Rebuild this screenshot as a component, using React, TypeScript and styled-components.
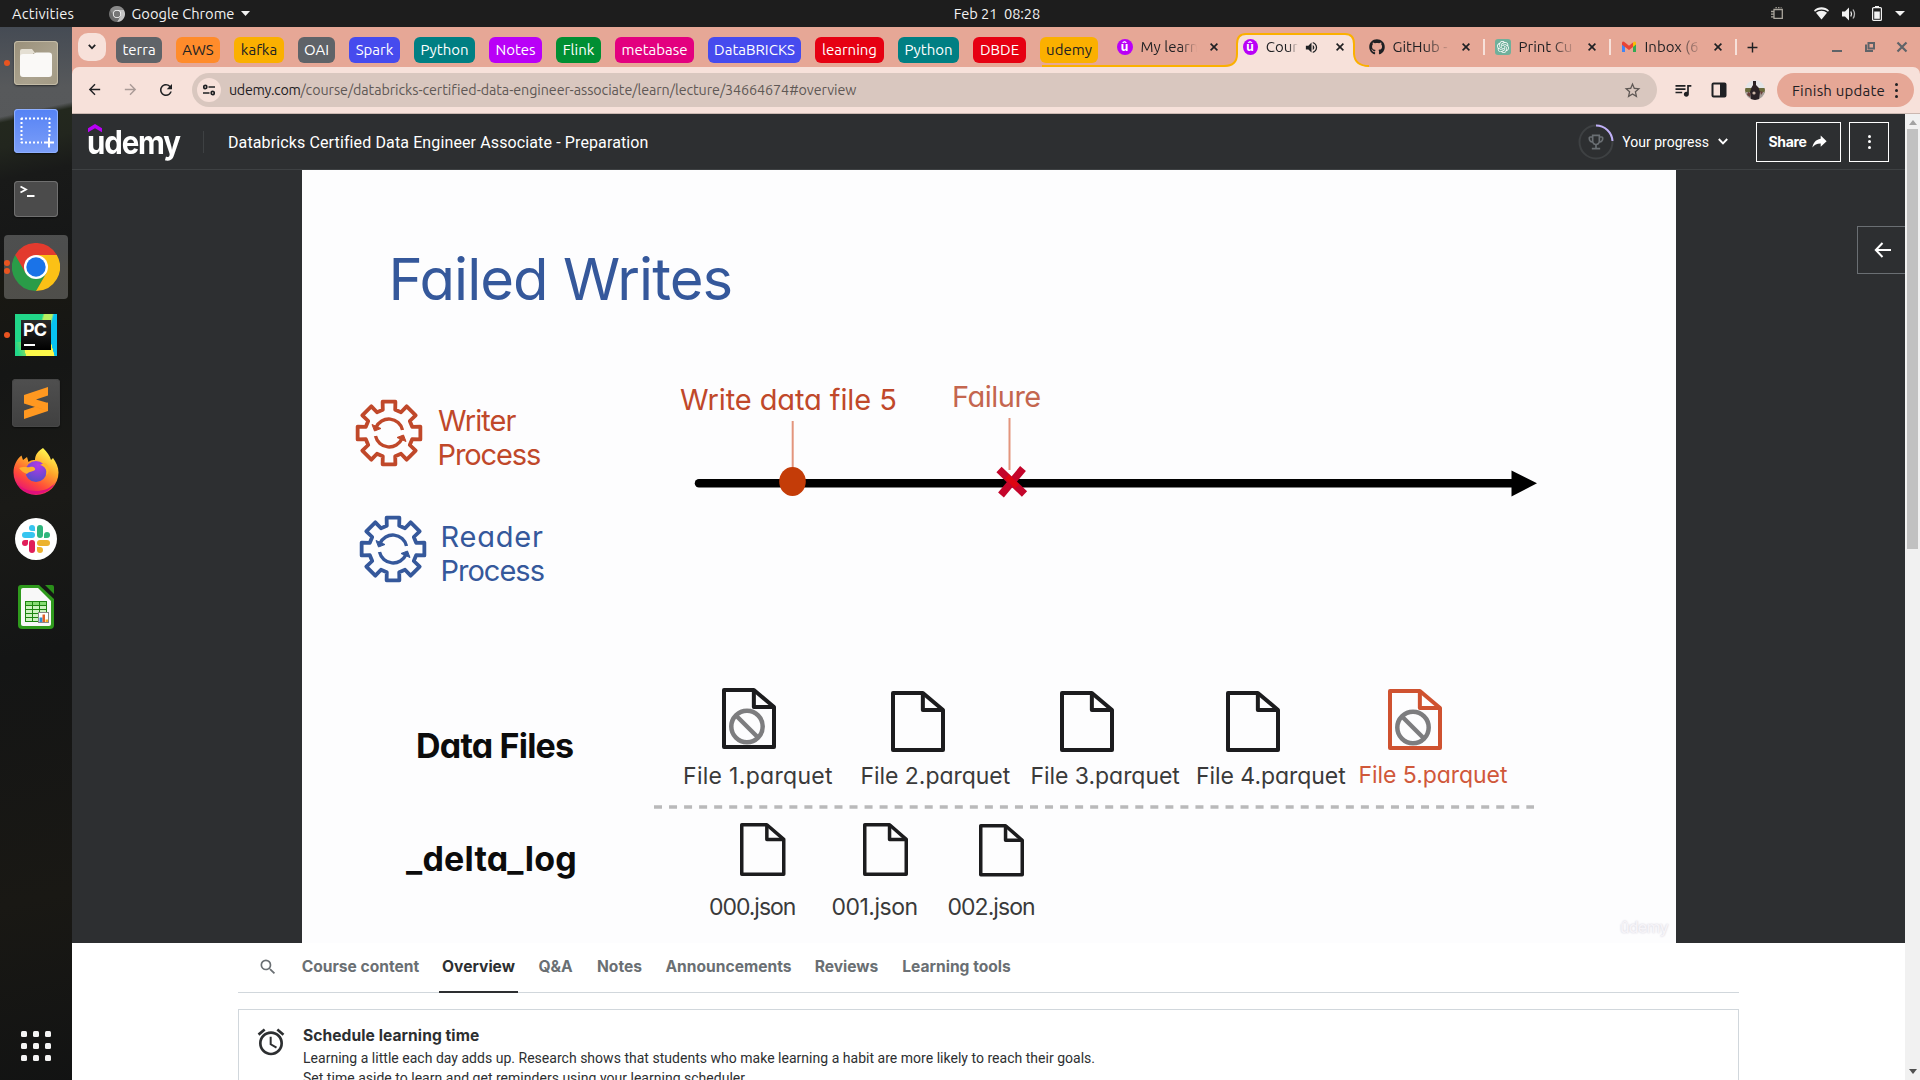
import React from "react";
import styled, { createGlobalStyle, css } from "styled-components";
import {
  MdAdd,
  MdAlarm,
  MdArrowBack,
  MdArrowForward,
  MdOutlineEmojiEvents,
  MdQueueMusic,
  MdRefresh,
  MdSearch,
  MdStarBorder,
  MdVolumeUp,
} from "react-icons/md";
import { FaGithub } from "react-icons/fa";
import { IoMdShareAlt } from "react-icons/io";
import { SiOpenai } from "react-icons/si";

const uiFont = `Ubuntu, "Noto Sans", sans-serif`;
const bodyFont = `Roboto, "Liberation Sans", sans-serif`;
const headFont = `Inter, "Liberation Sans", sans-serif`;

const c = {
  strip: "#e6a796",
  toolbar: "#f7e1da",
  omnibox: "#d9c7bf",
  dark: "#2d2f31",
  line: "#d1d7dc",
  ink: "#1f2023",
  rust: "#c0482a",
  blue: "#35589b",
};

const GlobalStyle = createGlobalStyle`
  *, *::before, *::after { box-sizing: border-box; }
  body { margin: 0; overflow: hidden; background: #fff; }
  svg { display: block; flex: none; }
`;

const Desktop = styled.div`
  width: 1920px;
  height: 1080px;
  overflow: hidden;
  display: grid;
  grid-template: 27px 1053px / 72px 1848px;
  font-family: ${uiFont};
`;

/* ---------- system bar ---------- */

const SystemBar = styled.header`
  grid-column: 1 / 3;
  display: grid;
  grid-template-columns: 1fr auto 1fr;
  align-items: center;
  background: #1d1d1d;
  color: #f2f2f2;
  font-size: 14.67px;
  line-height: 27px;
`;
const SystemLeft = styled.div`
  min-width: 0;
  display: flex;
  align-items: center;
  padding-left: 12px;
`;
const Activities = styled.span`
  letter-spacing: 0.2px;
`;
const AppMenu = styled.div`
  display: flex;
  align-items: center;
  gap: 6.5px;
  margin-left: 35px;
`;
const Clock = styled.div`
  white-space: pre;
  letter-spacing: -0.09px;
`;
const SystemRight = styled.div`
  min-width: 0;
  display: flex;
  justify-content: flex-end;
  align-items: center;
  padding-right: 15px;
`;
const Tray = styled.span<{ $gap: number }>`
  margin-left: ${(p) => p.$gap}px;
`;

/* ---------- dock ---------- */

const Dock = styled.nav`
  display: flex;
  flex-direction: column;
  gap: 4px;
  padding: 4px 4px 2px;
  background:
    linear-gradient(168deg, transparent 0 88px, #23281e 94px, #22261e 118px, #191a19 150px, #161717 230px, #191812 250px, #151615 340px, #1a1a17 470px, #141515 620px, #191814 860px, #121313 1053px),
    linear-gradient(#454b54, #57595b 60px, #4a4b4c);
`;
const DockItem = styled.div<{ $active?: boolean; $last?: boolean }>`
  position: relative;
  width: 64px;
  height: 64px;
  display: flex;
  align-items: center;
  justify-content: center;
  border-radius: 4px;
  background: ${(p) => (p.$active ? "rgba(255,255,255,.24)" : "transparent")};
  margin-top: ${(p) => (p.$last ? "auto" : 0)};
`;
const RunningDots = styled.span`
  position: absolute;
  left: 0;
  top: 0;
  bottom: 0;
  display: flex;
  flex-direction: column;
  justify-content: center;
  gap: 2.5px;
`;
const RunningDot = styled.i`
  width: 6px;
  height: 6px;
  border-radius: 50%;
  background: #e95420;
`;
const Tile = styled.div<{ $w: number; $h: number; $bg: string; $edge: string }>`
  width: ${(p) => p.$w}px;
  height: ${(p) => p.$h}px;
  border-radius: 4px;
  background: ${(p) => p.$bg};
  box-shadow: inset 0 0 0 1px ${(p) => p.$edge}, 0 1px 2px rgba(0, 0, 0, 0.5);
  display: flex;
  align-items: center;
  justify-content: center;
`;
const PyCharmTile = styled.div`
  width: 42px;
  height: 42px;
  padding: 6px;
  background:
    linear-gradient(75deg, #21d789 8%, #6fdc6a 24%, transparent 25%) 0 100% / 100% 34% no-repeat,
    linear-gradient(75deg, #fcf84a 86%, #07c3f2 87%) 0 100% / 100% 34% no-repeat,
    linear-gradient(105deg, #21d789 52%, #b8f060 56%, #b8f060 70%, #07c3f2 74%);
`;
const PyCharmInner = styled.div`
  width: 30px;
  height: 30px;
  padding: 2px;
  background: linear-gradient(#2b2b2b, #000);
  color: #fff;
  font: 700 18px/16px ${headFont};
  letter-spacing: -1px;
`;
const PyCharmBar = styled.div`
  width: 11px;
  height: 2px;
  margin: 6px 0 0 1px;
  background: #fff;
`;
const AppsGrid = styled.div`
  display: grid;
  grid-template-columns: repeat(3, 6px);
  gap: 6px;
`;
const AppsDot = styled.i`
  height: 6px;
  border-radius: 1.5px;
  background: #f4f4f4;
`;

/* ---------- browser chrome ---------- */

const Browser = styled.div`
  display: flex;
  flex-direction: column;
  min-width: 0;
`;
const TabStrip = styled.div`
  height: 40px;
  display: flex;
  align-items: flex-start;
  background: ${c.strip};
  padding-left: 6px;
  color: ${c.ink};
`;
const TabSearch = styled.div`
  width: 28px;
  height: 28px;
  margin: 6px 10px 0 0;
  border-radius: 10px;
  background: ${c.toolbar};
  display: flex;
  align-items: center;
  justify-content: center;
`;
const Chips = styled.div`
  display: flex;
  gap: 14px;
  margin-top: 10px;
`;
const Chip = styled.div<{ $w: number; $bg: string; $dark?: boolean }>`
  width: ${(p) => p.$w}px;
  height: 26px;
  border-radius: 6px;
  background: ${(p) => p.$bg};
  color: ${(p) => (p.$dark ? "#202124" : "#fff")};
  font-size: 15px;
  line-height: 25px;
  text-align: center;
  white-space: nowrap;
`;
const Tabs = styled.div`
  position: relative;
  display: flex;
  margin-left: 9px;
`;
const GroupOutline = styled.svg`
  position: absolute;
  left: -67px;
  top: 0;
`;
const TabBox = styled.div<{ $rule?: boolean }>`
  position: relative;
  width: 126px;
  height: 40px;
  padding: 0 15px 0 9.5px;
  display: flex;
  align-items: center;
  &::after {
    content: "";
    position: absolute;
    right: 0;
    top: 12px;
    width: 2px;
    height: 16px;
    background: ${(p) => (p.$rule ? c.toolbar : "transparent")};
  }
`;
const TabLabel = styled.div<{ $w: number; $solid?: boolean }>`
  width: ${(p) => p.$w}px;
  margin: 0 auto 0 8px;
  overflow: hidden;
  white-space: nowrap;
  font-size: 15px;
  line-height: 38px;
  mask-image: linear-gradient(to right, #000 ${(p) => (p.$solid ? 70 : 55)}%, transparent);
`;
const Speaker = styled.div`
  margin: 0 17px 0 6px;
`;
const UdemyBadge = styled.div`
  width: 16px;
  height: 16px;
  border-radius: 50%;
  background: #b900f7;
  color: #fff;
  font: 700 12px/15px ${headFont};
  text-align: center;
`;
const GptBadge = styled.div`
  width: 16px;
  height: 16px;
  border-radius: 3px;
  background: #6fb09b;
  color: #fff;
  display: flex;
  align-items: center;
  justify-content: center;
`;
const NewTab = styled.div`
  width: 30px;
  height: 40px;
  display: flex;
  align-items: center;
  justify-content: center;
`;
const WindowControls = styled.div`
  margin-left: auto;
  height: 40px;
  display: flex;
  align-items: center;
  gap: 20.5px;
  padding-right: 12px;
`;
const ToolbarBack = styled.div`
  background: ${c.strip};
`;
const Toolbar = styled.div`
  height: 47px;
  border-bottom: 1px solid #cbb8b1;
  border-radius: 7px 7px 0 0;
  background: ${c.toolbar};
  display: flex;
  align-items: center;
  padding: 0 6px 0 14px;
  color: ${c.ink};
`;
const NavButtons = styled.div`
  display: flex;
  gap: 18.5px;
  width: 106px;
`;
const Omnibox = styled.div`
  width: 1465px;
  height: 34px;
  border-radius: 17px;
  background: ${c.omnibox};
  display: flex;
  align-items: center;
  padding: 0 15px 0 5px;
  color: #5f5855;
`;
const SiteInfo = styled.div`
  width: 24px;
  height: 24px;
  border-radius: 50%;
  background: ${c.toolbar};
  display: flex;
  align-items: center;
  justify-content: center;
  margin-right: 8px;
`;
const Url = styled.div`
  font-size: 14.3px;
  line-height: 34px;
  letter-spacing: -0.06px;
  margin-right: auto;
  white-space: nowrap;
`;
const Host = styled.span`
  color: ${c.ink};
  letter-spacing: -0.3px;
`;
const ToolbarIcon = styled.div<{ $gap: number }>`
  margin-left: ${(p) => p.$gap}px;
`;
const Avatar = styled.svg`
  margin-left: 18px;
  border-radius: 50%;
`;
const UpdateButton = styled.div`
  width: 137px;
  height: 34px;
  margin-left: 12px;
  border-radius: 17px;
  background: ${c.strip};
  display: flex;
  align-items: center;
  padding-left: 15px;
  font-size: 15px;
  letter-spacing: 0.22px;
  white-space: nowrap;
`;
const DotColumn = styled.div<{ $ml?: number; $size: number; $gap: number; $color: string }>`
  display: grid;
  gap: ${(p) => p.$gap}px;
  margin-left: ${(p) => p.$ml ?? 0}px;
  i {
    width: ${(p) => p.$size}px;
    height: ${(p) => p.$size}px;
    border-radius: 50%;
    background: ${(p) => p.$color};
  }
`;

/* ---------- page ---------- */

const Viewport = styled.div`
  flex: 1;
  min-height: 0;
  display: grid;
  grid-template-columns: 1833px 15px;
`;
const Page = styled.main`
  overflow: hidden;
  background: #fff;
  color: ${c.dark};
  font-family: ${bodyFont};
`;
const Scrollbar = styled.div`
  background: #f1f1f1;
  display: flex;
  flex-direction: column;
  align-items: center;
  padding: 6px 0;
`;
const Thumb = styled.div`
  width: 11px;
  height: 420px;
  margin: 4px 0 auto;
  background: #c1c1c1;
`;
const CourseHeader = styled.header`
  height: 56px;
  display: flex;
  align-items: center;
  background: ${c.dark};
  border-bottom: 1px solid #3e4143;
  color: #fff;
  padding: 0 16px;
`;
const Logo = styled.div`
  position: relative;
  width: 115px;
  height: 56px;
`;
const LogoHat = styled.svg`
  position: absolute;
  left: 0;
  top: 10px;
`;
const LogoText = styled.div`
  font: 650 32px/56px ${headFont};
  letter-spacing: -1.2px;
  transform: scaleX(0.92);
  transform-origin: left;
  margin-left: -1.5px;
  padding-top: 1px;
`;
const HeaderRule = styled.div`
  width: 1px;
  height: 22px;
  background: #3e4143;
  margin-right: 24px;
`;
const CourseTitle = styled.h1`
  margin: 0 auto 0 0;
  font-size: 16px;
  font-weight: 400;
  letter-spacing: 0.12px;
  padding-top: 1px;
`;
const Progress = styled.div`
  display: flex;
  align-items: center;
  font-size: 14px;
`;
const Ring = styled.div`
  position: relative;
  width: 36px;
  height: 36px;
  margin-right: 8px;
  color: #6a6f73;
`;
const RingIcon = styled.div`
  position: absolute;
  left: 8px;
  top: 8px;
`;
const ProgressText = styled.span`
  margin-right: 9px;
`;
const OutlineButton = styled.div<{ $w: number; $ml: number }>`
  width: ${(p) => p.$w}px;
  height: 40px;
  margin-left: ${(p) => p.$ml}px;
  border: 1px solid #fff;
  display: flex;
  align-items: center;
  justify-content: center;
  gap: 3px;
  font: 700 14px ${headFont};
  letter-spacing: -0.3px;
`;
const Stage = styled.section`
  height: 773px;
  display: grid;
  grid-template-columns: 230px 1374px 229px;
  background: ${c.dark};
`;
const Gutter = styled.div`
  display: flex;
  justify-content: flex-end;
  align-items: flex-start;
  padding-top: 56px;
`;
const ExpandButton = styled.div`
  width: 48px;
  height: 48px;
  border: 1px solid #6a6f73;
  border-right: 0;
  color: #fff;
  display: flex;
  align-items: center;
  padding-left: 16px;
`;

/* ---------- slide ---------- */

const Slide = styled.div`
  position: relative;
  background: #fdfdfe;
  overflow: hidden;
`;
const Label = styled.div<{ $x: number; $base: number; $size: number; $ls: number; $color: string; $bold?: boolean }>`
  position: absolute;
  left: ${(p) => p.$x - 302}px;
  top: ${(p) => p.$base - 170 - p.$size * 0.864}px;
  font: ${(p) => (p.$bold ? 750 : 430)} ${(p) => p.$size}px/1 ${headFont};
  font-feature-settings: "cv11";
  letter-spacing: ${(p) => p.$ls}px;
  color: ${(p) => p.$color};
  white-space: nowrap;
`;
const Node = styled.svg<{ $x: number; $y: number }>`
  position: absolute;
  left: ${(p) => p.$x - 302}px;
  top: ${(p) => p.$y - 170}px;
  overflow: visible;
`;
const Watermark = styled.div`
  position: absolute;
  right: 8px;
  bottom: 8px;
  font: 500 16px/1 ${headFont};
  letter-spacing: -0.8px;
  color: #f6f4f8;
  text-shadow: 0 0 2px #cfccd8;
`;

/* ---------- course tabs ---------- */

const Content = styled.section`
  width: 1501px;
  margin-left: 166px;
`;
const CourseTabs = styled.div`
  height: 50px;
  display: flex;
  gap: 16px;
  padding-left: 20px;
  border-bottom: 1px solid ${c.line};
`;
const SearchTab = styled.div`
  width: 24px;
  display: flex;
  align-items: center;
  color: #6a6f73;
  padding-bottom: 1px;
`;
const CourseTab = styled.div<{ $active?: boolean; $w: number }>`
  width: ${(p) => p.$w}px;
  height: 50px;
  font: 700 15.6px/48px ${headFont};
  text-align: center;
  white-space: nowrap;
  color: ${(p) => (p.$active ? c.dark : "#6a6f73")};
  ${(p) => p.$active && css`box-shadow: inset 0 -2px 0 ${c.dark};`}
`;
const ReminderCard = styled.div`
  display: flex;
  margin-top: 16px;
  height: 120px;
  border: 1px solid ${c.line};
  padding: 16px 16px 0;
  color: ${c.dark};
`;
const CardBody = styled.div`
  margin-left: 16px;
`;
const CardTitle = styled.h2`
  margin: 0;
  font: 700 15.6px/20px ${headFont};
  letter-spacing: 0.06px;
`;
const CardText = styled.p`
  margin: 2px 0 0;
  font-size: 14px;
  line-height: 20px;
  letter-spacing: 0.02px;
`;

/* ---------- data ---------- */

const chips: [string, number, string, boolean?][] = [
  ["terra", 46, "#5f6368"],
  ["AWS", 44, "#ff8c2b", true],
  ["kafka", 50, "#fbb000", true],
  ["OAI", 37, "#5f6368"],
  ["Spark", 51, "#464bee"],
  ["Python", 61, "#007f83"],
  ["Notes", 53, "#b900f7"],
  ["Flink", 45, "#008f33"],
  ["metabase", 79, "#e3007f"],
  ["DataBRICKS", 93, "#464bee"],
  ["learning", 69, "#e60012"],
  ["Python", 61, "#007f83"],
  ["DBDE", 53, "#e60012"],
  ["udemy", 58, "#fbb000", true],
];

const labels: { t: string; x: number; base: number; size: number; ls: number; color: string; bold?: boolean }[] = [
  { t: "Failed Writes", x: 388.5, base: 300.5, size: 58, ls: -0.95, color: c.blue },
  { t: "Writer", x: 438, base: 431, size: 29, ls: -0.9, color: c.rust },
  { t: "Process", x: 437.5, base: 465.5, size: 29, ls: -1.1, color: c.rust },
  { t: "Reader", x: 440.5, base: 547, size: 29, ls: 0.8, color: c.blue },
  { t: "Process", x: 440.5, base: 581.5, size: 29, ls: -1.0, color: c.blue },
  { t: "Write data file 5", x: 680, base: 410, size: 29, ls: -0.1, color: c.rust },
  { t: "Failure", x: 952, base: 407.5, size: 29, ls: -0.5, color: "#c4664f" },
  { t: "Data Files", x: 416, base: 758.5, size: 34, ls: -0.8, color: "#0c0c0c", bold: true },
  { t: "_delta_log", x: 406, base: 871.5, size: 34, ls: 0.2, color: "#0c0c0c", bold: true },
  { t: "File 1.parquet", x: 683, base: 785, size: 23, ls: 0.3, color: "#3a3a3a" },
  { t: "File 2.parquet", x: 860.5, base: 785, size: 23, ls: -0.05, color: "#3a3a3a" },
  { t: "File 3.parquet", x: 1030.5, base: 785, size: 23, ls: -0.05, color: "#3a3a3a" },
  { t: "File 4.parquet", x: 1196, base: 785, size: 23, ls: -0.05, color: "#3a3a3a" },
  { t: "File 5.parquet", x: 1358.5, base: 783.5, size: 23, ls: -0.05, color: "#d0583a" },
  { t: "000.json", x: 709, base: 915.5, size: 23, ls: -1.05, color: "#3a3a3a" },
  { t: "001.json", x: 831.5, base: 915.5, size: 23, ls: -0.5, color: "#3a3a3a" },
  { t: "002.json", x: 947.5, base: 916, size: 23, ls: -0.95, color: "#3a3a3a" },
];

const files = [
  { x: 721.5, y: 688, w: 54, h: 61, color: "#1c1c1e", blocked: true },
  { x: 890.5, y: 691, w: 54, h: 61, color: "#1c1c1e" },
  { x: 1059.5, y: 691, w: 54, h: 61, color: "#1c1c1e" },
  { x: 1225.5, y: 691, w: 54, h: 61, color: "#1c1c1e" },
  { x: 1388, y: 689, w: 54, h: 61, color: "#cf5230", blocked: true },
  { x: 740, y: 822.5, w: 45.5, h: 53, color: "#1c1c1e" },
  { x: 862.5, y: 822.5, w: 45, h: 53, color: "#1c1c1e" },
  { x: 979, y: 824, w: 45, h: 52.5, color: "#1c1c1e" },
];

const courseTabs: [string, number][] = [
  ["Course content", 125],
  ["Overview", 79],
  ["Q&A", 43],
  ["Notes", 53],
  ["Announcements", 133],
  ["Reviews", 71],
  ["Learning tools", 117],
];

/* ---------- slide drawings ---------- */

function FileIcon({ x, y, w, h, color, blocked }: (typeof files)[number]) {
  const s = w > 50 ? 4 : 3.5;
  const k = s / 2;
  const fx = w * 0.59;
  const fy = h * 0.31;
  return (
    <Node $x={x} $y={y} width={w} height={h} fill="none" stroke={color} strokeWidth={s} strokeLinejoin="round">
      <path d={`M${k} ${k}H${fx}L${w - k} ${fy}V${h - k}H${k}Z`} />
      <path d={`M${fx} ${k}V${fy}H${w - k}`} />
      {blocked && (
        <g stroke="#7d7d7f" strokeWidth="4.5">
          <circle cx="25" cy="38.5" r="15.7" />
          <path d="M14 27.5L36 49.5" />
        </g>
      )}
    </Node>
  );
}

function gearPath() {
  const pts: string[] = [];
  for (let i = 0; i < 8; i++) {
    for (const [r, d] of [
      [24, -15],
      [32, -11.5],
      [32, 11.5],
      [24, 15],
    ]) {
      const a = ((i * 45 + d - 90) * Math.PI) / 180;
      pts.push(`${(r * Math.cos(a)).toFixed(2)} ${(r * Math.sin(a)).toFixed(2)}`);
    }
  }
  return `M${pts.join("L")}Z`;
}

function Gear({ x, y, color }: { x: number; y: number; color: string }) {
  return (
    <Node $x={x - 34} $y={y - 34} width="68" height="68" viewBox="-34 -34 68 68" fill="none" stroke={color}>
      <path d={gearPath()} strokeWidth="3.8" strokeLinejoin="round" />
      <path d="M-13 -5.5A14 14 0 0 1 13.5 -3M13 5.5A14 14 0 0 1 -13.5 3" strokeWidth="3.4" />
      <path d="M-17 -8.5L-14.5 -2L-8 -4.5ZM17 8.5L14.5 2L8 4.5Z" fill={color} strokeWidth="1" />
    </Node>
  );
}

function SlideCanvas() {
  return (
    <Slide>
      <Gear x={389} y={433} color={c.rust} />
      <Gear x={392.5} y={549} color={c.blue} />
      <Node $x={690} $y={415} width="850" height="90">
        <path d="M102.7 6V60" stroke="#e3957d" strokeWidth="2" />
        <path d="M319.5 3V55" stroke="#e3957d" strokeWidth="2" />
        <path d="M9 68.3H825" stroke="#000" strokeWidth="8.5" strokeLinecap="round" />
        <path d="M821.5 55.5L847 68.3L821.5 81.5Z" fill="#000" />
        <ellipse cx="102.5" cy="66.5" rx="13.3" ry="14.5" fill="#c43c08" />
        <path d="M309 54.500L334.500 79M333 53.500L311 80" stroke="#c4052b" strokeWidth="7.500" />
        <path d="M317 61.500L327 71.500" stroke="#de0512" strokeWidth="6" />
      </Node>
      {files.map((f) => (
        <FileIcon key={f.x} {...f} />
      ))}
      <Node $x={654} $y={805} width="880" height="4">
        <path d="M0 2H880" stroke="#b9b9ba" strokeWidth="3.5" strokeDasharray="8 7.040" />
      </Node>
      {labels.map((l) => (
        <Label key={l.x + l.t} $x={l.x} $base={l.base} $size={l.size} $ls={l.ls} $color={l.color} $bold={l.bold}>
          {l.t}
        </Label>
      ))}
      <Watermark>ûdemy</Watermark>
    </Slide>
  );
}

/* ---------- dock icons ---------- */

const FilesIcon = () => (
  <Tile $w={44} $h={44} $bg="linear-gradient(135deg,#9a907a,#aaa28e 60%,#a39a84)" $edge="#c3bba6">
    <svg width="34" height="30" viewBox="0 0 34 30">
      <path d="M1 3a2 2 0 0 1 2-2h10l3 4h-2v8H1z" fill="#e4dfd3" />
      <path d="M1 9a3 3 0 0 1 3-3h10l3-1.500H30a3 3 0 0 1 3 3V26a3 3 0 0 1-3 3H4a3 3 0 0 1-3-3z" fill="#faf9f7" />
    </svg>
  </Tile>
);
const ScreenshotIcon = () => (
  <Tile $w={44} $h={44} $bg="linear-gradient(#5582f5,#7c9ff8)" $edge="#8fb0ff">
    <svg width="36" height="34" viewBox="0 0 36 34" fill="none" stroke="#fff">
      <path d="M3 4.500H32M3 28.500H24" strokeWidth="2" strokeDasharray="2 2" />
      <path d="M3.500 4V29M31.500 4V22" strokeWidth="2" strokeDasharray="2 2" />
      <path d="M26 28.500H36M31 23.500V33.500" strokeWidth="2" />
    </svg>
  </Tile>
);
const TerminalIcon = () => (
  <Tile $w={44} $h={36} $bg="#4b4b4b" $edge="#707070">
    <svg width="44" height="36" viewBox="0 0 44 36" fill="none" stroke="#fff" strokeWidth="1.8">
      <path d="M6.500 5.500L12 8.500L6.500 11.500M13 15H20.500" />
    </svg>
  </Tile>
);
const ChromeIcon = ({ size = 48, mono = false }: { size?: number; mono?: boolean }) => (
  <svg width={size} height={size} viewBox="-24 -24 48 48">
    <path d="M0 0L-20.800 -12A24 24 0 0 1 20.800 -12Z" fill={mono ? "#8a8a8a" : "#e33b2e"} />
    <path d="M-20.800 -12A24 24 0 0 0 0 24L10.400 6L0 0Z" fill={mono ? "#6d6d6d" : "#2a9c48"} />
    <path d="M20.800 -12A24 24 0 0 1 0 24L10.400 6L0 -12Z" fill={mono ? "#c4c4c4" : "#fbc116"} />
    <path d="M-20.800 -12L-10.400 6L0 -12H20.800L0 -18Z" fill={mono ? "#8a8a8a" : "#e33b2e"} />
    <circle r="12" fill="#fff" />
    <circle r="9.700" fill={mono ? "#777" : "#1a73e8"} />
  </svg>
);
const SublimeIcon = () => (
  <Tile $w={48} $h={48} $bg="linear-gradient(#4f4f4f,#404040)" $edge="#474747">
    <svg width="24" height="32" viewBox="0 0 24 32">
      <path d="M0 23.500L24 15.500V24L0 32Z" fill="#ff9820" />
      <path d="M0 8L24 0V8.500L12 12.500L24 16V24L0 16.500Z" fill="#ff9820" />
      <path d="M10 19.500L24 24L15 21Z" fill="#d87808" />
    </svg>
  </Tile>
);
const FirefoxIcon = () => (
  <svg width="46" height="47" viewBox="0 0 46 47">
    <defs>
      <linearGradient id="fxBody" x1="0.8" y1="0.1" x2="0.3" y2="1">
        <stop offset="0" stopColor="#fff44f" />
        <stop offset="0.35" stopColor="#ffa52a" />
        <stop offset="0.7" stopColor="#ff4a3a" />
        <stop offset="1" stopColor="#e5107a" />
      </linearGradient>
      <radialGradient id="fxGlobe" cx="0.6" cy="0.2" r="0.9">
        <stop offset="0" stopColor="#b03ae8" />
        <stop offset="1" stopColor="#4b4fc4" />
      </radialGradient>
    </defs>
    <path
      d="M30 0C34 4 37 8 38 12L40 10C43 14 45.500 19 45.500 24.500A22.500 22.500 0 0 1 .5 24.500C.5 18 3.500 11 8.500 7.500L10 12L14 9L15.500 14C18 12 20 12 22 12C22 7 25 3 30 0Z"
      fill="url(#fxBody)"
    />
    <path d="M3 34A22.500 22.500 0 0 0 43 34C37 41 30 43 23 43C14 43 7 40 3 34Z" fill="#e0107c" />
    <circle cx="23" cy="23.500" r="10.500" fill="url(#fxGlobe)" />
    <path d="M6 20C10 18 14 20 17 19C20 18 23 20 22 22C20 24 16 23 14 26C11 25 8 23 6 20Z" fill="#ffb02e" />
    <path d="M27 17C32 18 35 23 33 28C38 22 36 16 31 15Z" fill="#ffb52b" />
  </svg>
);
const SlackIcon = () => (
  <svg width="42" height="42" viewBox="0 0 42 42">
    <circle cx="21" cy="21" r="21" fill="#fff" />
    <g fill="#36c5f0">
      <rect x="7" y="14" width="13" height="6" rx="3" />
      <path d="M20 13H17a3 3 0 1 1 3-3Z" />
    </g>
    <g fill="#2eb67d">
      <rect x="22" y="7" width="6" height="13" rx="3" />
      <path d="M29 20V17a3 3 0 1 1 3 3Z" />
    </g>
    <g fill="#ecb22e">
      <rect x="22" y="22" width="13" height="6" rx="3" />
      <path d="M22 29H25a3 3 0 1 1-3 3Z" />
    </g>
    <g fill="#e01e5a">
      <rect x="14" y="22" width="6" height="13" rx="3" />
      <path d="M13 22V25a3 3 0 1 1-3-3Z" />
    </g>
  </svg>
);
const CalcIcon = () => (
  <svg width="38" height="46" viewBox="0 0 38 46">
    <path d="M4 1H22L37 15V41a4 4 0 0 1-4 4H5a4 4 0 0 1-4-4V4a3 3 0 0 1 3-3Z" fill="#2f9a1d" />
    <path d="M28 1H35a2 2 0 0 1 2 2V10Z" fill="#2a8f1a" />
    <path d="M6 4H21L34 17V40a2 2 0 0 1-2 2H6a2 2 0 0 1-2-2V6a2 2 0 0 1 2-2Z" fill="#f8f8f8" />
    <rect x="8" y="17" width="22" height="21" fill="#1d8410" />
    {[0, 1, 2, 3, 4].map((r) =>
      [0, 1, 2].map((k) => (
        <rect key={`${r}${k}`} x={9 + k * 7} y={18 + r * 4} width="6" height="3" fill={r ? "#cdf2c0" : "#86dc72"} />
      )),
    )}
    <rect x="21.500" y="28.500" width="10" height="10" fill="#fff" stroke="#888" />
    <path d="M22.500 33.500h3V38h-3z" fill="#2b8fd8" />
    <path d="M25.500 30.500h2.500V38h-2.500z" fill="#e0602a" />
    <path d="M28.500 35.500h2.500V38h-2.500z" fill="#f0b020" />
  </svg>
);

function LauncherDock() {
  return (
    <Dock>
      <DockItem>
        <RunningDots>
          <RunningDot />
        </RunningDots>
        <FilesIcon />
      </DockItem>
      <DockItem>
        <ScreenshotIcon />
      </DockItem>
      <DockItem>
        <TerminalIcon />
      </DockItem>
      <DockItem $active>
        <RunningDots>
          <RunningDot />
          <RunningDot />
        </RunningDots>
        <ChromeIcon />
      </DockItem>
      <DockItem>
        <RunningDots>
          <RunningDot />
        </RunningDots>
        <PyCharmTile>
          <PyCharmInner>
            PC
            <PyCharmBar />
          </PyCharmInner>
        </PyCharmTile>
      </DockItem>
      <DockItem>
        <SublimeIcon />
      </DockItem>
      <DockItem>
        <FirefoxIcon />
      </DockItem>
      <DockItem>
        <SlackIcon />
      </DockItem>
      <DockItem>
        <CalcIcon />
      </DockItem>
      <DockItem $last>
        <AppsGrid>
          {Array.from({ length: 9 }, (_, i) => (
            <AppsDot key={i} />
          ))}
        </AppsGrid>
      </DockItem>
    </Dock>
  );
}

/* ---------- composition ---------- */

const ClockSlot = styled.div`
  padding-left: 74px;
`;

function TopBar() {
  return (
    <SystemBar>
      <SystemLeft>
        <Activities>Activities</Activities>
        <AppMenu>
          <ChromeIcon size={16} mono />
          Google Chrome
          <svg width="9" height="5" viewBox="0 0 9 5">
            <path d="M0 0H9L4.500 5Z" fill="#f2f2f2" />
          </svg>
        </AppMenu>
      </SystemLeft>
      <ClockSlot>
        <Clock>Feb 21  08:28</Clock>
      </ClockSlot>
      <SystemRight>
        <Tray $gap={0}>
          <svg width="12" height="13" viewBox="0 0 12 13" fill="none" stroke="#a9a59c" strokeWidth="1.300">
            <path d="M3 2.500H11.300V11.300H3Z" />
            <path d="M0 4.500H3M0 7.200H3M0 9.900H3" />
            <path d="M4.500 .6H10.500" strokeDasharray="1.300 1.300" />
          </svg>
        </Tray>
        <Tray $gap={31}>
          <svg width="15" height="13" viewBox="0 0 15 13" fill="#f2f2f2">
            <path d="M0 3.500C4 -.8 11 -.8 15 3.500L14 4.800C10.500 1.600 4.500 1.600 1 4.800Z" />
            <path d="M2 5.700C5 3 10 3 13 5.700L7.500 12.500Z" />
          </svg>
        </Tray>
        <Tray $gap={13}>
          <svg width="15" height="14" viewBox="0 0 15 14" fill="none" stroke="#f2f2f2" strokeWidth="1.300">
            <path d="M0 4.500H3L7 .5V13.500L3 9.500H0Z" fill="#f2f2f2" stroke="none" />
            <path d="M8.800 4.500Q10.300 7 8.800 9.500" />
            <path d="M11 2.500Q14 7 11 11.500" stroke="#b5b5b5" />
          </svg>
        </Tray>
        <Tray $gap={15}>
          <svg width="10" height="15" viewBox="0 0 10 15">
            <path d="M3 0H7V1.500H3Z" fill="#f2f2f2" />
            <rect x=".6" y="1.600" width="8.800" height="12.800" rx="1" fill="none" stroke="#f2f2f2" strokeWidth="1.200" />
            <path d="M2.200 5.500H7.800V12.800H2.200Z" fill="#f2f2f2" />
          </svg>
        </Tray>
        <Tray $gap={13}>
          <svg width="10" height="5" viewBox="0 0 10 5">
            <path d="M0 0H10L5 5Z" fill="#f2f2f2" />
          </svg>
        </Tray>
      </SystemRight>
    </SystemBar>
  );
}

const Close = () => (
  <svg width="8" height="8" viewBox="0 0 8 8" stroke={c.ink} strokeWidth="1.600">
    <path d="M.6 .6L7.400 7.400M7.400 .6L.6 7.400" />
  </svg>
);

function Strip() {
  return (
    <TabStrip>
      <TabSearch>
        <svg width="8" height="6" viewBox="0 0 8 6" fill="none" stroke={c.ink} strokeWidth="1.800">
          <path d="M.8 .9L4 4.300L7.200 .9" />
        </svg>
      </TabSearch>
      <Chips>
        {chips.map(([name, w, bg, dark], i) => (
          <Chip key={i} $w={w} $bg={bg} $dark={dark}>
            {name}
          </Chip>
        ))}
      </Chips>
      <Tabs>
        <GroupOutline width="330" height="40" viewBox="1040 27 330 40">
          <path d="M1225 67Q1237 66 1237 55V44Q1237 34 1246 34H1344Q1354 34 1354 44V54Q1355 66 1369 67Z" fill={c.toolbar} />
          <path
            d="M1042 66H1224Q1237 66 1237 54V44Q1237 34 1246 34H1345Q1354 34 1354 44V54Q1355 66 1369 66"
            fill="none"
            stroke="#fbb000"
            strokeWidth="2"
          />
        </GroupOutline>
        <TabBox>
          <UdemyBadge>û</UdemyBadge>
          <TabLabel $w={56} $solid>
            My learn
          </TabLabel>
          <Close />
        </TabBox>
        <TabBox>
          <UdemyBadge>û</UdemyBadge>
          <TabLabel $w={34} $solid>
            Cours
          </TabLabel>
          <Speaker>
            <MdVolumeUp size={15} />
          </Speaker>
          <Close />
        </TabBox>
        <TabBox $rule>
          <FaGithub size={16} />
          <TabLabel $w={58}>GitHub -</TabLabel>
          <Close />
        </TabBox>
        <TabBox $rule>
          <GptBadge>
            <SiOpenai size={12} />
          </GptBadge>
          <TabLabel $w={58}>Print Cu</TabLabel>
          <Close />
        </TabBox>
        <TabBox $rule>
          <svg width="16" height="16" viewBox="0 0 16 16">
            <path d="M1 3.500V13H4V6Z" fill="#4285f4" />
            <path d="M12 6V13H15V3.500Z" fill="#34a853" />
            <path d="M12 3.500V8L15 5.500V4Q14.500 1.500 12 3.500Z" fill="#fbbc04" />
            <path d="M1 4Q1.500 1.500 4 3.500L8 6.700L12 3.500V8L8 11L1 5.700Z" fill="#ea4335" />
          </svg>
          <TabLabel $w={58}>Inbox (6</TabLabel>
          <Close />
        </TabBox>
      </Tabs>
      <NewTab>
        <MdAdd size={17} />
      </NewTab>
      <WindowControls>
        <svg width="12" height="12" viewBox="0 0 12 12">
          <path d="M1 9H11V11H1Z" fill="#5f6368" />
        </svg>
        <svg width="12" height="12" viewBox="0 0 12 12" fill="none" stroke="#5f6368" strokeWidth="2">
          <path d="M4.500 2H10V7.500H4.500ZM2 3.500V10H9" />
        </svg>
        <svg width="12" height="12" viewBox="0 0 12 12" stroke="#5f6368" strokeWidth="2.200">
          <path d="M1.500 1.500L10.500 10.500M10.500 1.500L1.500 10.500" />
        </svg>
      </WindowControls>
    </TabStrip>
  );
}

function AddressBar() {
  return (
    <ToolbarBack>
      <Toolbar>
        <NavButtons>
          <MdArrowBack size={17} />
          <MdArrowForward size={17} color="#a99a96" />
          <MdRefresh size={18} />
        </NavButtons>
        <Omnibox>
          <SiteInfo>
            <svg width="12" height="12" viewBox="0 0 12 12" fill="none" stroke={c.ink} strokeWidth="1.600">
              <circle cx="2.300" cy="3" r="1.600" />
              <path d="M5.500 3H12M0 9H6.500" />
              <circle cx="9.700" cy="9" r="1.600" />
            </svg>
          </SiteInfo>
          <Url>
            <Host>udemy.com</Host>/course/databricks-certified-data-engineer-associate/learn/lecture/34664674#overview
          </Url>
          <MdStarBorder size={19} />
        </Omnibox>
        <ToolbarIcon $gap={16}>
          <MdQueueMusic size={20} />
        </ToolbarIcon>
        <ToolbarIcon $gap={18}>
          <svg width="16" height="16" viewBox="0 0 16 16">
            <rect x="1.500" y="1.500" width="13" height="13" rx="1" fill="none" stroke={c.ink} strokeWidth="2" />
            <path d="M9 1H15V15H9Z" fill={c.ink} />
          </svg>
        </ToolbarIcon>
        <Avatar width="20" height="20" viewBox="0 0 20 20">
          <rect width="20" height="20" fill="#e4e6e8" />
          <rect y="8" width="20" height="5" fill="#6b6a3c" />
          <rect y="12" width="20" height="8" fill="#a59d97" />
          <path d="M8 1h3v4l2.500 2.500L15 12l-1 8H6l-1-8 1.500-4.500L8 5z" fill="#2a2226" />
          <circle cx="9" cy="13" r="1.600" fill="#c9b4a6" />
          <path d="M3 12l2.500 1L5 17l-3-2zM15 11l3 1-2 3z" fill="#6b3f3a" />
        </Avatar>
        <UpdateButton>
          Finish update
          <DotColumn $ml={10} $size={3} $gap={3} $color={c.ink}>
            <i />
            <i />
            <i />
          </DotColumn>
        </UpdateButton>
      </Toolbar>
    </ToolbarBack>
  );
}

function LectureHeader() {
  return (
    <CourseHeader>
      <Logo>
        <LogoHat width="14" height="9" viewBox="0 0 14 9">
          <path d="M0 4.300L7 0L14 4.300V8.300L7 4.300L0 8.300Z" fill="#b900f7" />
        </LogoHat>
        <LogoText>udemy</LogoText>
      </Logo>
      <HeaderRule />
      <CourseTitle>Databricks Certified Data Engineer Associate - Preparation</CourseTitle>
      <Progress>
        <Ring>
          <svg width="36" height="36" viewBox="0 0 36 36" fill="none" strokeWidth="2">
            <circle cx="18" cy="18" r="16.500" stroke="#3e4143" />
            <path d="M18 1.500A16.500 16.500 0 0 1 34.500 17" stroke="#c0b0f8" />
          </svg>
          <RingIcon>
            <MdOutlineEmojiEvents size={20} />
          </RingIcon>
        </Ring>
        <ProgressText>Your progress</ProgressText>
        <svg width="10" height="7" viewBox="0 0 10 7" fill="none" stroke="#fff" strokeWidth="1.900">
          <path d="M.8 1L5 5.400L9.200 1" />
        </svg>
      </Progress>
      <OutlineButton $w={85} $ml={28}>
        Share <IoMdShareAlt size={19} />
      </OutlineButton>
      <OutlineButton $w={40} $ml={8}>
        <DotColumn $size={3} $gap={2.5} $color="#fff">
          <i />
          <i />
          <i />
        </DotColumn>
      </OutlineButton>
    </CourseHeader>
  );
}

export default function App() {
  return (
    <>
      <GlobalStyle />
      <Desktop>
        <TopBar />
        <LauncherDock />
        <Browser>
          <Strip />
          <AddressBar />
          <Viewport>
            <Page>
              <LectureHeader />
              <Stage>
                <Gutter />
                <SlideCanvas />
                <Gutter>
                  <ExpandButton>
                    <svg width="17" height="16" viewBox="0 0 17 16" fill="none" stroke="#fff" strokeWidth="2">
                      <path d="M8.500 1L1.800 8L8.500 15M2 8H17" />
                    </svg>
                  </ExpandButton>
                </Gutter>
              </Stage>
              <Content>
                <CourseTabs>
                  <SearchTab>
                    <MdSearch size={20} />
                  </SearchTab>
                  {courseTabs.map(([name, w]) => (
                    <CourseTab key={name} $w={w} $active={name === "Overview"}>
                      {name}
                    </CourseTab>
                  ))}
                </CourseTabs>
                <ReminderCard>
                  <MdAlarm size={32} />
                  <CardBody>
                    <CardTitle>Schedule learning time</CardTitle>
                    <CardText>
                      Learning a little each day adds up. Research shows that students who make learning a habit are more
                      likely to reach their goals.
                      <br />
                      Set time aside to learn and get reminders using your learning scheduler.
                    </CardText>
                  </CardBody>
                </ReminderCard>
              </Content>
            </Page>
            <Scrollbar>
              <svg width="8" height="5" viewBox="0 0 8 5">
                <path d="M0 5L4 0L8 5Z" fill="#a3a3a3" />
              </svg>
              <Thumb />
              <svg width="8" height="5" viewBox="0 0 8 5">
                <path d="M0 0H8L4 5Z" fill="#505050" />
              </svg>
            </Scrollbar>
          </Viewport>
        </Browser>
      </Desktop>
    </>
  );
}
